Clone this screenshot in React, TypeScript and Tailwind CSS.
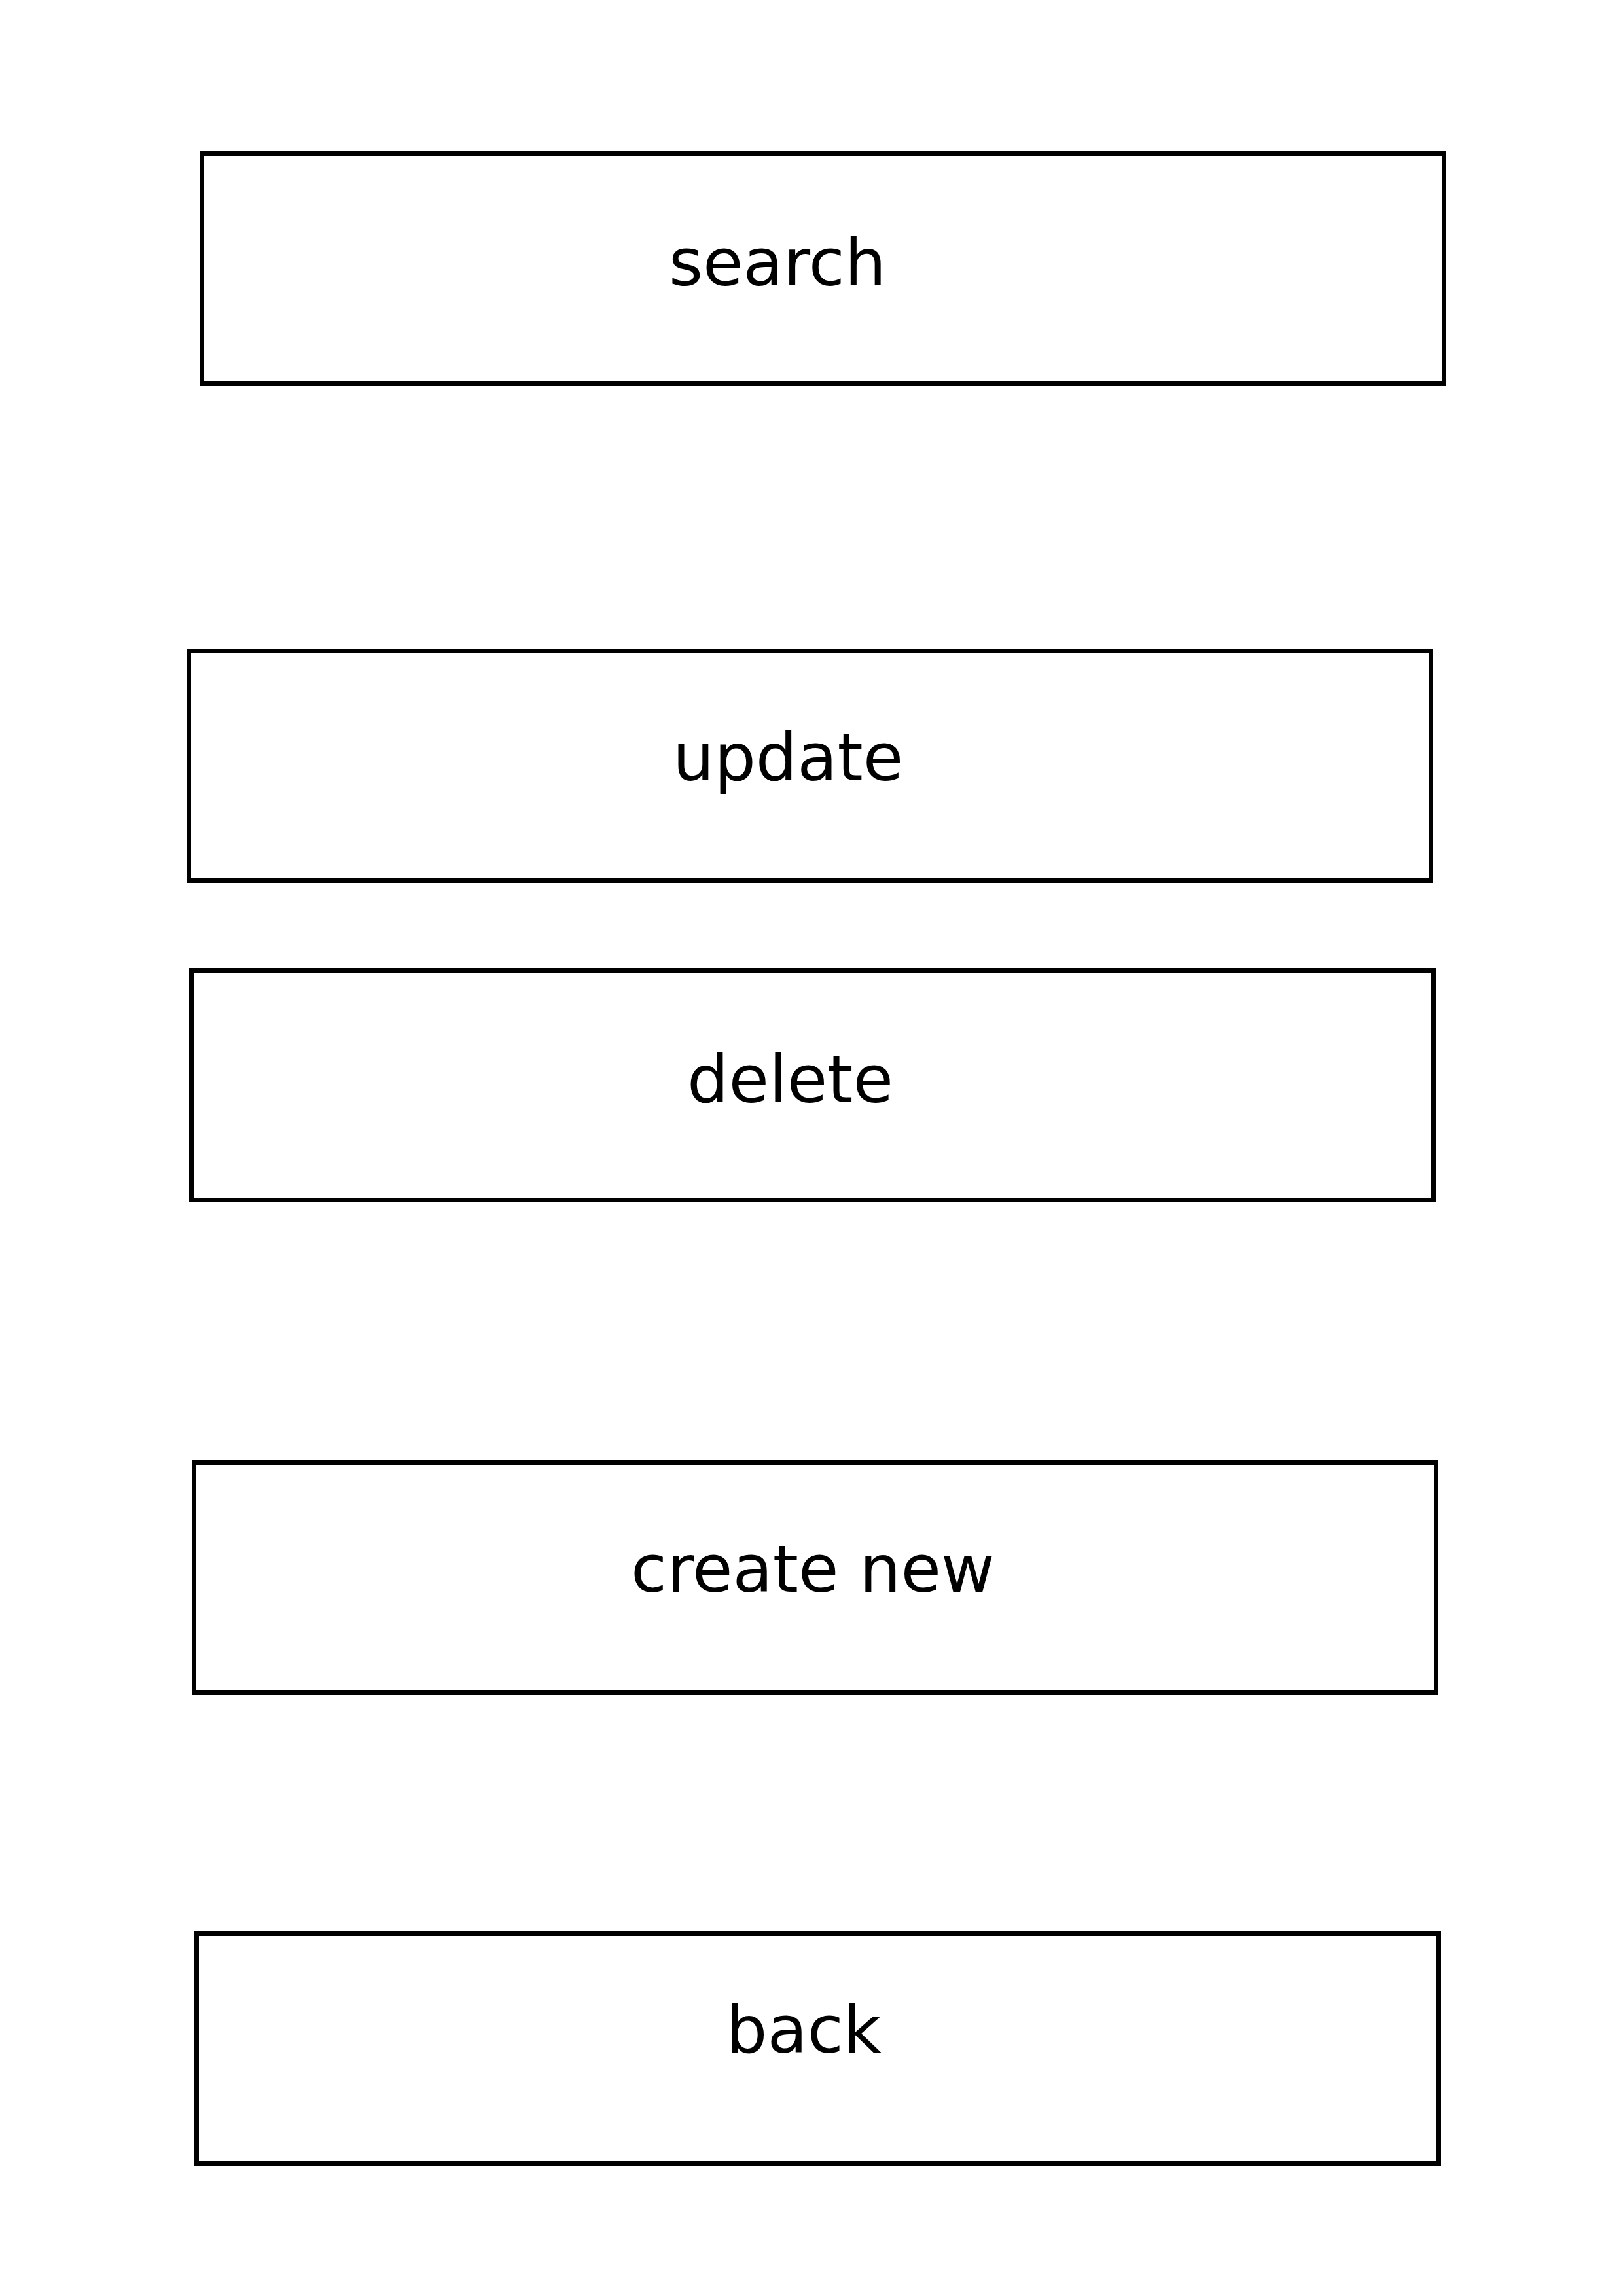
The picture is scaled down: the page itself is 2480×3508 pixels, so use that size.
import React from "react";

export default function App() {
  const box =
    "w-[1905px] h-[358px] border-[7px] border-black text-[100px] leading-[100px] text-black whitespace-nowrap";
  return (
    <div
      className="w-[2480px] h-[3508px] bg-white flex flex-col items-start"
      style={{ fontFamily: '"DejaVu Sans", sans-serif' }}
    >
      <div className={`${box} ml-[305px] mt-[231px] pl-[710px] pt-[114px]`}>search</div>
      <div className={`${box} ml-[285px] mt-[402px] pl-[736px] pt-[110px]`}>update</div>
      <div className={`${box} ml-[289px] mt-[130px] pl-[754px] pt-[114px]`}>delete</div>
      <div className={`${box} ml-[293px] mt-[394px] pl-[664px] pt-[110px]`}>create new</div>
      <div className={`${box} ml-[297px] mt-[362px] pl-[805px] pt-[94px]`}>back</div>
    </div>
  );
}
